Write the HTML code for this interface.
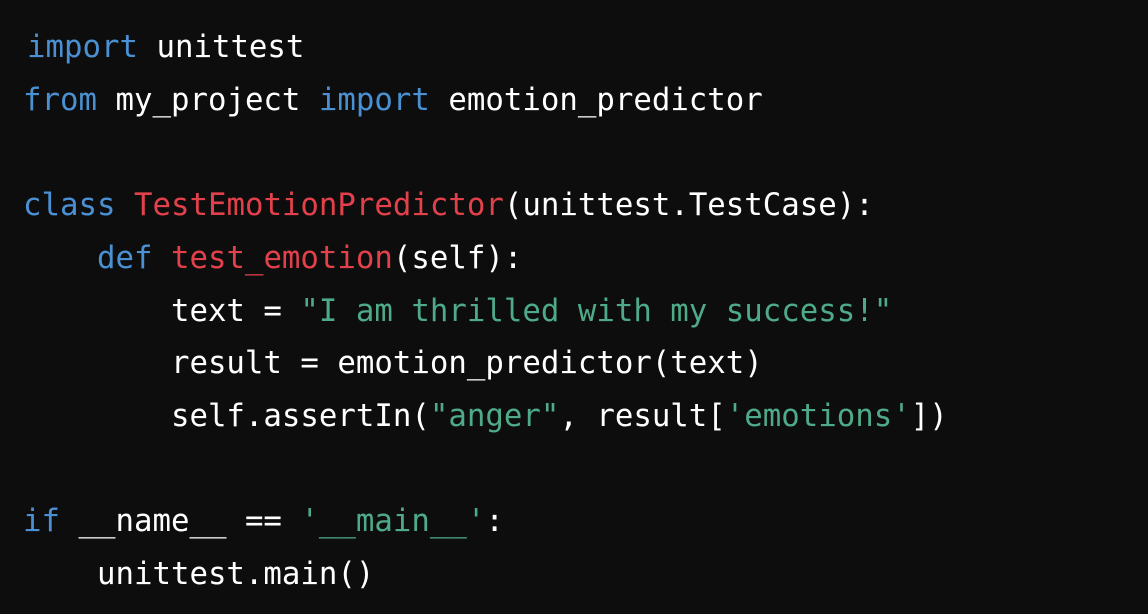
<!DOCTYPE html>
<html><head><meta charset="utf-8"><style>
html,body{margin:0;padding:0;background:#0d0d0d;width:1148px;height:614px;overflow:hidden}
pre{margin:0;position:absolute;left:23px;top:21px;font-family:"DejaVu Sans Mono","Liberation Mono",monospace;font-size:30.72px;line-height:52.7px;color:#ffffff}
.k{color:#4a90d2}.r{color:#e2414b}.g{color:#4eaa88}
.f{margin-left:4px}
</style></head><body><pre><span class="f"><span class="k">import</span> unittest</span>
<span class="k">from</span> my_project <span class="k">import</span> emotion_predictor

<span class="k">class</span> <span class="r">TestEmotionPredictor</span>(unittest.TestCase):
    <span class="k">def</span> <span class="r">test_emotion</span>(self):
        text = <span class="g">"I am thrilled with my success!"</span>
        result = emotion_predictor(text)
        self.assertIn(<span class="g">"anger"</span>, result[<span class="g">'emotions'</span>])

<span class="k">if</span> __name__ == <span class="g">'__main__'</span>:
    unittest.main()</pre></body></html>
